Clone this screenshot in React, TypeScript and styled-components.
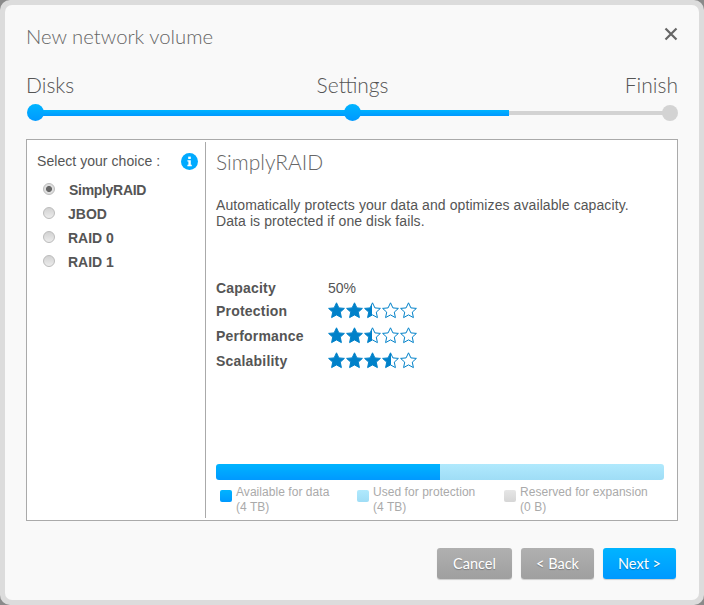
import React from 'react';
import styled, { createGlobalStyle } from 'styled-components';

const Global = createGlobalStyle`
  html, body { margin: 0; padding: 0; width: 704px; height: 605px; overflow: hidden; background: #8a8a8a; }
  * { box-sizing: border-box; }
`;

const Frame = styled.div`
  width: 704px; height: 605px; padding: 5px;
  background: #dcdcdc; border-radius: 10px;
`;
const Dialog = styled.div`
  width: 694px; height: 595px; background: #f9f9f9; border-radius: 7px;
  padding: 18px 21px 0 21px; display: flex; flex-direction: column; position: relative;
`;
const Header = styled.div`
  display: flex; justify-content: space-between; align-items: center; height: 27px;
`;
const Title = styled.h1`
  margin: 0; font: 300 20.3px/27px Lato, sans-serif; color: #666;
`;
const Close = styled.svg`
  width: 14px; height: 14px; margin-top: -6px; display: block;
`;
const StepLabels = styled.div`
  display: flex; justify-content: space-between; margin-top: 22px; height: 26px;
  font: 300 21px/26px Lato, sans-serif; color: #555;
`;
const MiddleStep = styled.span`
  margin-left: 6px;
`;
const Track = styled.div`
  position: relative; height: 18px; margin-top: 5px;
`;
const Rail = styled.div`
  position: absolute; left: 8px; right: 8px; top: 8px; height: 4px; background: #d3d3d3;
`;
const Fill = styled.div`
  position: absolute; left: 8px; top: 7px; height: 6px; width: 475px;
  background: linear-gradient(#00b4ff, #0099ff);
`;
const Dot = styled.div<{ $on?: boolean; $left: number }>`
  position: absolute; top: ${p => (p.$on ? 1 : 2)}px; left: ${p => p.$left}px;
  width: ${p => (p.$on ? 17 : 16)}px; height: ${p => (p.$on ? 17 : 16)}px; border-radius: 50%;
  background: ${p => (p.$on ? 'linear-gradient(#00b4ff, #0099ff)' : '#d3d3d3')};
`;
const Panel = styled.div`
  margin-top: 18px; width: 652px; height: 382px; background: #fff; border: 1px solid #aaa;
  display: flex;
`;
const Side = styled.div`
  width: 179px; border-right: 1px solid #aaa; padding: 10px 0 0 10px; margin: 2px 0;
`;
const SelectRow = styled.div`
  display: flex; align-items: center; justify-content: space-between; padding-right: 7px; height: 18px;
  font: 400 14px/18px "Liberation Sans", Arial, sans-serif; color: #555; letter-spacing: 0.05px;
`;
const InfoIcon = styled.svg`
  width: 17px; height: 17px; display: block;
`;
const Options = styled.div`
  display: flex; flex-direction: column; margin-top: 8px; padding-left: 6px;
`;
const Option = styled.div<{ $on?: boolean }>`
  display: flex; align-items: center; height: 24px; gap: ${p => (p.$on ? 14 : 13)}px;
  font: 700 14px/24px "Liberation Sans", Arial, sans-serif; color: #555;
  letter-spacing: ${p => (p.$on ? '-0.3px' : '0')};
`;
const Radio = styled.span<{ $on?: boolean }>`
  width: 12px; height: 12px; border-radius: 50%; flex: none; border: 1px solid #bbb; margin-top: -2px;
  background: ${p => (p.$on ? 'radial-gradient(circle, #666 0 2.6px, #dedede 3.4px)' : 'linear-gradient(#d2d2d2, #ececec)')};
`;
const Main = styled.div`
  flex: 1; padding: 9px 13px 0 10px; display: flex; flex-direction: column;
`;
const Heading = styled.h2`
  margin: 0; font: 300 21px/26px Lato, sans-serif; color: #666;
`;
const Desc = styled.p`
  margin: 22px 0 0; font: 400 14px/16px "Liberation Sans", Arial, sans-serif; color: #555; letter-spacing: 0.09px;
`;
const Specs = styled.div`
  margin-top: 48px; display: flex; flex-direction: column;
`;
const Spec = styled.div<{ $h: number }>`
  display: flex; align-items: center; height: ${p => p.$h}px;
`;
const SpecLabel = styled.span`
  width: 112px; font: 700 14px/18px "Liberation Sans", Arial, sans-serif; color: #555; letter-spacing: 0.2px;
`;
const SpecValue = styled.span`
  font: 400 14px/18px "Liberation Sans", Arial, sans-serif; color: #555;
`;
const Stars = styled.span`
  display: flex; gap: 1px;
`;
const StarSvg = styled.svg`
  width: 17px; height: 17px; display: block;
`;
const Spacer = styled.div`flex: 1;`;
const Bar = styled.div`
  display: flex; height: 16px; border-radius: 3px; overflow: hidden;
`;
const BarPart = styled.div<{ $bg: string; $w: number }>`
  width: ${p => p.$w}px; background: ${p => p.$bg};
`;
const Legend = styled.div`
  display: flex; margin-top: 5px; height: 35px;
`;
const LegendItem = styled.div<{ $w: number }>`
  width: ${p => p.$w}px; display: flex; padding-left: 4px; gap: 4px;
  font: 400 12px/15px "Liberation Sans", Arial, sans-serif; color: #aaa; letter-spacing: 0.05px;
`;
const Swatch = styled.span<{ $bg: string }>`
  flex: none; width: 12px; height: 12px; margin-top: 5px; border-radius: 2px; background: ${p => p.$bg};
`;
const Footer = styled.div`
  display: flex; justify-content: flex-end; gap: 9px; margin-top: 27px; padding-right: 2px;
`;
const Button = styled.button<{ $primary?: boolean; $w: number }>`
  width: ${p => p.$w}px; height: 31px; border: 0; border-radius: 3px; padding: 0;
  font: 400 14.5px/30px Lato, sans-serif; color: #fff;
  text-shadow: 0 1px 1px rgba(0,0,0,.25);
  background: ${p => (p.$primary ? 'linear-gradient(#00b4ff, #0099ff)' : 'linear-gradient(#b0b0b0, #9f9f9f)')};
  box-shadow: 0 1px 1px rgba(0,0,0,.18);
`;

const STAR = 'M8.5 .8L10.9 5.9 16.4 6.4 12.3 10.1 13.4 15.6 8.5 12.9 3.6 15.6 4.7 10.1 .6 6.4 6.1 5.9Z';
function Star({ kind, id }: { kind: 'full' | 'half' | 'empty'; id: string }) {
  const fill = kind === 'full' ? '#0081c9' : kind === 'half' ? `url(#${id})` : '#fff';
  return (
    <StarSvg viewBox="0 0 17 17">
      {kind === 'half' && (
        <defs>
          <linearGradient id={id}>
            <stop offset="50%" stopColor="#0081c9" />
            <stop offset="50%" stopColor="#fff" />
          </linearGradient>
        </defs>
      )}
      <path d={STAR} fill={fill} stroke="#0081c9" strokeWidth="1" strokeLinejoin="miter" />
    </StarSvg>
  );
}
function Rating({ value, name }: { value: number; name: string }) {
  return (
    <Stars>
      {[0, 1, 2, 3, 4].map(i => (
        <Star key={i} id={`${name}${i}`} kind={value >= i + 1 ? 'full' : value > i ? 'half' : 'empty'} />
      ))}
    </Stars>
  );
}

export default function App() {
  return (
    <Frame>
      <Global />
      <Dialog>
        <Header>
          <Title>New network volume</Title>
          <Close viewBox="0 0 14 14">
            <path d="M1.5 1.5l11 11M12.5 1.5l-11 11" stroke="#666" strokeWidth="2.2" fill="none" />
          </Close>
        </Header>
        <StepLabels>
          <span>Disks</span>
          <MiddleStep>Settings</MiddleStep>
          <span>Finish</span>
        </StepLabels>
        <Track>
          <Rail />
          <Fill />
          <Dot $on $left={1} />
          <Dot $on $left={318} />
          <Dot $left={636} />
        </Track>
        <Panel>
          <Side>
            <SelectRow>
              <span>Select your choice :</span>
              <InfoIcon viewBox="0 0 17 17">
                <circle cx="8.5" cy="8.5" r="8.5" fill="#00aaff" />
                <rect x="7.2" y="3.6" width="2.6" height="2.4" fill="#fff" />
                <path d="M6.4 7.2h3.4v4.6h1v1.4H6.4v-1.4h1V8.6h-1z" fill="#fff" />
              </InfoIcon>
            </SelectRow>
            <Options>
              <Option $on><Radio $on /><span>SimplyRAID</span></Option>
              <Option><Radio /><span>JBOD</span></Option>
              <Option><Radio /><span>RAID 0</span></Option>
              <Option><Radio /><span>RAID 1</span></Option>
            </Options>
          </Side>
          <Main>
            <Heading>SimplyRAID</Heading>
            <Desc>
              Automatically protects your data and optimizes available capacity.
              <br />
              Data is protected if one disk fails.
            </Desc>
            <Specs>
              <Spec $h={21}><SpecLabel>Capacity</SpecLabel><SpecValue>50%</SpecValue></Spec>
              <Spec $h={25}><SpecLabel>Protection</SpecLabel><Rating value={2.5} name="a" /></Spec>
              <Spec $h={25}><SpecLabel>Performance</SpecLabel><Rating value={2.5} name="b" /></Spec>
              <Spec $h={25}><SpecLabel>Scalability</SpecLabel><Rating value={3.5} name="c" /></Spec>
            </Specs>
            <Spacer />
            <Bar>
              <BarPart $w={224} $bg="linear-gradient(#00b4ff, #0099ff)" />
              <BarPart $w={224} $bg="linear-gradient(#b0e9fd, #9fddf6)" />
            </Bar>
            <Legend>
              <LegendItem $w={137}>
                <Swatch $bg="linear-gradient(#00b4ff, #0099ff)" />
                <span>Available for data<br />(4 TB)</span>
              </LegendItem>
              <LegendItem $w={147}>
                <Swatch $bg="linear-gradient(#b0e9fd, #9fddf6)" />
                <span>Used for protection<br />(4 TB)</span>
              </LegendItem>
              <LegendItem $w={160}>
                <Swatch $bg="linear-gradient(#e6e6e6, #d6d6d6)" />
                <span>Reserved for expansion<br />(0 B)</span>
              </LegendItem>
            </Legend>
          </Main>
        </Panel>
        <Footer>
          <Button $w={75}>Cancel</Button>
          <Button $w={73}>&lt; Back</Button>
          <Button $primary $w={73}>Next &gt;</Button>
        </Footer>
      </Dialog>
    </Frame>
  );
}
